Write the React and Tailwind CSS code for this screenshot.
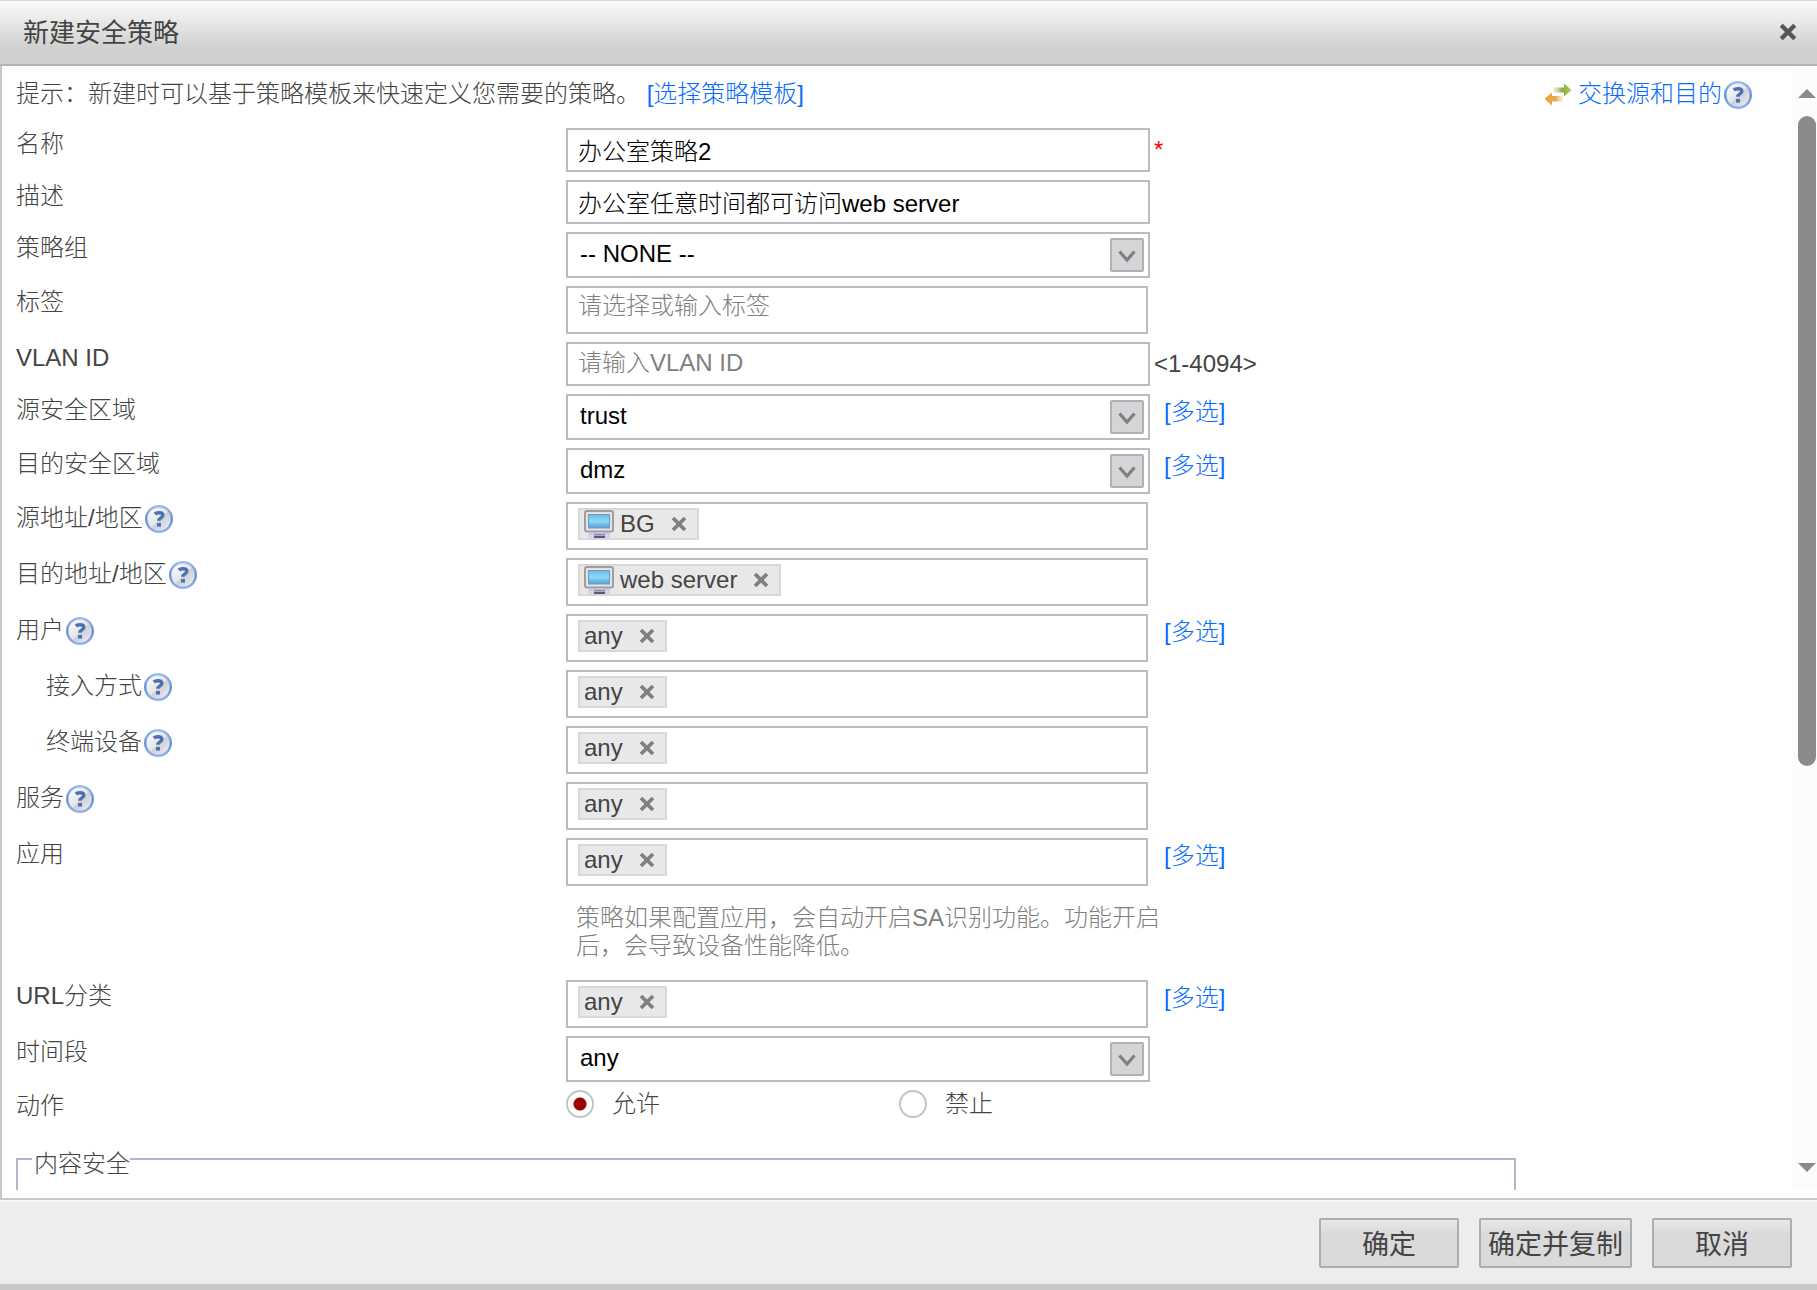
import React, { useState } from "react";

function HelpIcon({ label = "帮助" }) {
  return (
    <button type="button" aria-label={label} className="mt-0.5 ml-0.5 h-7 w-7 shrink-0">
      <svg viewBox="0 0 28 28" className="h-7 w-7">
        <defs>
          <linearGradient id="helpRing" x1="0" y1="0" x2="0" y2="1">
            <stop offset="0" stopColor="#9dbdee" />
            <stop offset="0.5" stopColor="#6590d6" />
            <stop offset="1" stopColor="#8fb0f2" />
          </linearGradient>
          <linearGradient id="helpFill" x1="0" y1="0" x2="1" y2="1">
            <stop offset="0" stopColor="#ffffff" />
            <stop offset="0.5" stopColor="#e6e6e9" />
            <stop offset="0.55" stopColor="#cfd0d6" />
            <stop offset="1" stopColor="#f4f4f6" />
          </linearGradient>
        </defs>
        <circle cx="14" cy="14" r="12.8" fill="url(#helpFill)" stroke="url(#helpRing)" strokeWidth="2.4" />
        <path d="M9.800 9c1-1 2.400-1.300 4.100-1.300 2.600 0 4 .9 4 2.600 0 2.700-4.100 2.600-4.100 5.500" fill="none" stroke="#4a70b5" strokeWidth="3.400" />
        <rect x="12" y="18" width="4" height="3.600" fill="#4a70b5" />
      </svg>
    </button>
  );
}

function SwapIcon() {
  return (
    <svg viewBox="0 0 28 24" className="h-6 w-7 shrink-0" aria-hidden="true">
      <defs>
        <linearGradient id="swapGreen" x1="0" y1="0" x2="1" y2="0">
          <stop offset="0" stopColor="#b4cc7a" stopOpacity="0.2" />
          <stop offset="0.5" stopColor="#86a848" />
          <stop offset="1" stopColor="#b3d04e" />
        </linearGradient>
        <linearGradient id="swapOrange" x1="0" y1="0" x2="1" y2="0">
          <stop offset="0" stopColor="#eea42a" />
          <stop offset="0.6" stopColor="#e8a850" />
          <stop offset="1" stopColor="#f2cf9b" stopOpacity="0.3" />
        </linearGradient>
      </defs>
      <path d="M9 5.500h11V1.500l7.500 6.500-7.500 6.500v-4H9z" fill="url(#swapGreen)" />
      <path d="M19 14H8v-3.500L.5 17 8 23.500v-4h11z" fill="url(#swapOrange)" />
    </svg>
  );
}

function ComputerIcon() {
  return (
    <svg viewBox="0 0 30 28" className="h-7 w-[30px] shrink-0" aria-hidden="true">
      <defs>
        <linearGradient id="screen" x1="0" y1="0" x2="0" y2="1">
          <stop offset="0" stopColor="#74b8e8" />
          <stop offset="0.5" stopColor="#8ad9f6" />
          <stop offset="1" stopColor="#5b9bd8" />
        </linearGradient>
      </defs>
      <rect x="1" y="1" width="28" height="20.500" rx="2" fill="#e6e3e0" stroke="#a09d9f" strokeWidth="2" />
      <rect x="4.500" y="4.500" width="21" height="13.500" fill="url(#screen)" stroke="#6a9cc8" strokeWidth="1" />
      <path d="M5 22.500h21V24H5z" fill="#c4c1cc" />
      <path d="M4 24h22v4H4z" fill="#d4d0ee" />
      <path d="M10 24h11v1.500H10z" fill="#8b86b8" />
      <path d="M10 26h11v2H10z" fill="#5a5680" />
    </svg>
  );
}

function Cross({ className }) {
  return (
    <svg viewBox="0 0 16 16" className={className} aria-hidden="true">
      <path d="M2 2l12 12M14 2L2 14" fill="none" stroke="currentColor" strokeWidth="3.800" />
    </svg>
  );
}

function Row({ id, label, help, indent, aside, children }) {
  return (
    <div className="flex items-start">
      <div className={`flex w-[550px] shrink-0 items-center leading-8 ${indent ? "pl-[30px]" : ""}`}>
        <label htmlFor={id}>{label}</label>
        {help && <HelpIcon label={`${label}帮助`} />}
      </div>
      <div className="w-[584px] shrink-0">{children}</div>
      {aside}
    </div>
  );
}

function MultiSelect() {
  return (
    <a href="#multi" className="ml-3.5 pt-1 leading-7 text-[#0a6cff]">
      [多选]
    </a>
  );
}

function TextField({ id, defaultValue, placeholder }) {
  return (
    <input
      id={id}
      type="text"
      defaultValue={defaultValue}
      placeholder={placeholder}
      className="block h-11 w-full border-2 border-[#bbbbc1] bg-white px-2.5 pb-0.5 text-black outline-none placeholder:text-[#808080] placeholder:opacity-100"
    />
  );
}

function SelectField({ id, options }) {
  return (
    <div className="relative">
      <select id={id} className="block h-[46px] w-full appearance-none border-2 border-[#bbbbc1] bg-white pr-12 pb-0.5 pl-3 text-black outline-none">
        {options.map((o) => (
          <option key={o}>{o}</option>
        ))}
      </select>
      <span className="pointer-events-none absolute top-1.5 right-1.5 flex h-[34px] w-[34px] items-center justify-center rounded-xs border-2 border-[#b0b0b5] bg-[#d4d5d7]">
        <svg viewBox="0 0 20 16" className="mt-0.5 h-4 w-5" aria-hidden="true">
          <path d="M2.500 3.500L10 12l7.500-8.500" fill="none" stroke="#808083" strokeWidth="3.200" />
        </svg>
      </span>
    </div>
  );
}

function TokenField({ id, token, computer, placeholder }) {
  const [value, setValue] = useState(token);
  return (
    <div className="flex h-12 w-[582px] items-start border-2 border-[#bbbbc1] bg-white pt-1 pl-2.5">
      {value && (
        <span className="mr-1 flex h-8 shrink-0 items-center border-2 border-[#d8d8d8] bg-[#e8e8e8] pr-2.5 pl-1 leading-7">
          {computer && <ComputerIcon />}
          <span className={computer ? "ml-1.5" : ""}>{value}</span>
          <button type="button" aria-label={`移除 ${value}`} onClick={() => setValue("")} className="ml-4 text-[#808080]">
            <Cross className="h-4 w-4" />
          </button>
        </span>
      )}
      <input id={id} type="text" placeholder={placeholder} className="h-7 min-w-0 flex-1 bg-transparent outline-none placeholder:text-[#808080] placeholder:opacity-100" />
    </div>
  );
}

function Radio({ label, defaultChecked }) {
  return (
    <label className="flex w-[333px] shrink-0 items-center gap-[18px] leading-7">
      <input
        type="radio"
        name="action"
        defaultChecked={defaultChecked}
        className="h-7 w-7 appearance-none rounded-full border-2 border-[#c4c4c4] bg-white checked:bg-[radial-gradient(circle,#a00000_0_6px,#ffffff_7px)]"
      />
      {label}
    </label>
  );
}

function FooterButton({ children, className }) {
  return (
    <button type="button" className={`h-[50px] rounded-xs border-2 border-[#acadb1] bg-linear-to-b from-[#e8e8e8] to-[#dadada] to-30% pt-1 text-[27px] leading-9 font-normal ${className}`}>
      {children}
    </button>
  );
}

export default function App() {
  return (
    <div className="flex h-screen flex-col bg-[#ededed] font-['Liberation_Sans','Noto_Sans_CJK_SC',sans-serif] text-2xl font-light text-[#444444]">
      <header className="flex h-[66px] shrink-0 items-center justify-between border-t border-b-2 border-t-[#d8d8d8] border-b-[#b4b4b4] bg-linear-to-b from-[#f8f8f8] from-5% to-[#d0d0d0] to-75% pr-5 pl-[23px]">
        <h1 className="text-[26px] leading-9 font-normal">新建安全策略</h1>
        <button type="button" aria-label="关闭" className="pb-0.5 text-[#555555]">
          <Cross className="h-[18px] w-[18px]" />
        </button>
      </header>

      <div className="flex min-h-0 flex-1 border-b-2 border-l-2 border-[#c8c8c8] bg-white">
        <main className="mb-2 min-w-0 flex-1 overflow-hidden pt-3.5 pl-3.5">
          <div className="flex h-7 items-center justify-between pr-10 leading-7">
            <p>
              提示：新建时可以基于策略模板来快速定义您需要的策略。{" "}
              <a href="#template" className="text-[#0a6cff]">
                [选择策略模板]
              </a>
            </p>
            <div className="flex items-center">
              <a href="#swap" className="flex items-center gap-1.5 text-[#0a6cff]">
                <SwapIcon />
                交换源和目的
              </a>
              <HelpIcon />
            </div>
          </div>

          <form className="mt-5 flex flex-col gap-2">
            <Row id="name" label="名称" aside={<span className="ml-1 pt-2 leading-7 text-[#ff0000]">*</span>}>
              <TextField id="name" defaultValue="办公室策略2" />
            </Row>
            <Row id="desc" label="描述">
              <TextField id="desc" defaultValue="办公室任意时间都可访问web server" />
            </Row>
            <Row id="group" label="策略组">
              <SelectField id="group" options={["-- NONE --"]} />
            </Row>
            <Row id="tag" label="标签">
              <TokenField id="tag" placeholder="请选择或输入标签" />
            </Row>
            <Row id="vlan" label="VLAN ID" aside={<span className="ml-1 pt-2 leading-7">&lt;1-4094&gt;</span>}>
              <TextField id="vlan" placeholder="请输入VLAN ID" />
            </Row>
            <Row id="srczone" label="源安全区域" aside={<MultiSelect />}>
              <SelectField id="srczone" options={["trust", "dmz"]} />
            </Row>
            <Row id="dstzone" label="目的安全区域" aside={<MultiSelect />}>
              <SelectField id="dstzone" options={["dmz", "trust"]} />
            </Row>
            <Row id="srcaddr" label="源地址/地区" help>
              <TokenField id="srcaddr" token="BG" computer />
            </Row>
            <Row id="dstaddr" label="目的地址/地区" help>
              <TokenField id="dstaddr" token="web server" computer />
            </Row>
            <Row id="user" label="用户" help aside={<MultiSelect />}>
              <TokenField id="user" token="any" />
            </Row>
            <Row id="access" label="接入方式" help indent>
              <TokenField id="access" token="any" />
            </Row>
            <Row id="device" label="终端设备" help indent>
              <TokenField id="device" token="any" />
            </Row>
            <Row id="service" label="服务" help>
              <TokenField id="service" token="any" />
            </Row>
            <Row id="app" label="应用" aside={<MultiSelect />}>
              <TokenField id="app" token="any" />
              <p className="mt-[18px] mb-3 ml-2.5 w-[600px] leading-7 text-[#808080]">
                策略如果配置应用，会自动开启SA识别功能。功能开启后，会导致设备性能降低。
              </p>
            </Row>
            <Row id="url" label="URL分类" aside={<MultiSelect />}>
              <TokenField id="url" token="any" />
            </Row>
            <Row id="time" label="时间段">
              <SelectField id="time" options={["any"]} />
            </Row>
            <Row label="动作">
              <div className="flex">
                <Radio label="允许" defaultChecked />
                <Radio label="禁止" />
              </div>
            </Row>
            <fieldset className="mt-1 h-24 w-[1500px] max-w-full border-2 border-[#b3b5c8] pl-3.5">
              <legend className="pt-2.5 pl-0.5 leading-10">内容安全</legend>
            </fieldset>
          </form>
        </main>

        <div className="mt-1 mb-2 flex w-[25px] shrink-0 flex-col items-end bg-[#fcfcfc] pt-[19px] pr-px pb-[18px]" aria-hidden="true">
          <svg viewBox="0 0 18 9" className="h-[9px] w-[18px]">
            <path d="M0 9L9 0l9 9z" fill="#8a8a8a" />
          </svg>
          <div className="mt-[18px] mb-auto h-[60%] w-[18px] rounded-full bg-[#8a8a8a]" />
          <svg viewBox="0 0 18 9" className="h-[9px] w-[18px]">
            <path d="M0 0l9 9 9-9z" fill="#8a8a8a" />
          </svg>
        </div>
      </div>

      <footer className="flex h-[90px] shrink-0 items-start justify-end gap-5 border-t-2 border-b-[6px] border-t-[#f8f8f8] border-b-[#c8c8c8] bg-[#ededed] pt-4 pr-[25px]">
        <FooterButton className="w-[140px]">确定</FooterButton>
        <FooterButton className="w-[153px]">确定并复制</FooterButton>
        <FooterButton className="w-[140px]">取消</FooterButton>
      </footer>
    </div>
  );
}
